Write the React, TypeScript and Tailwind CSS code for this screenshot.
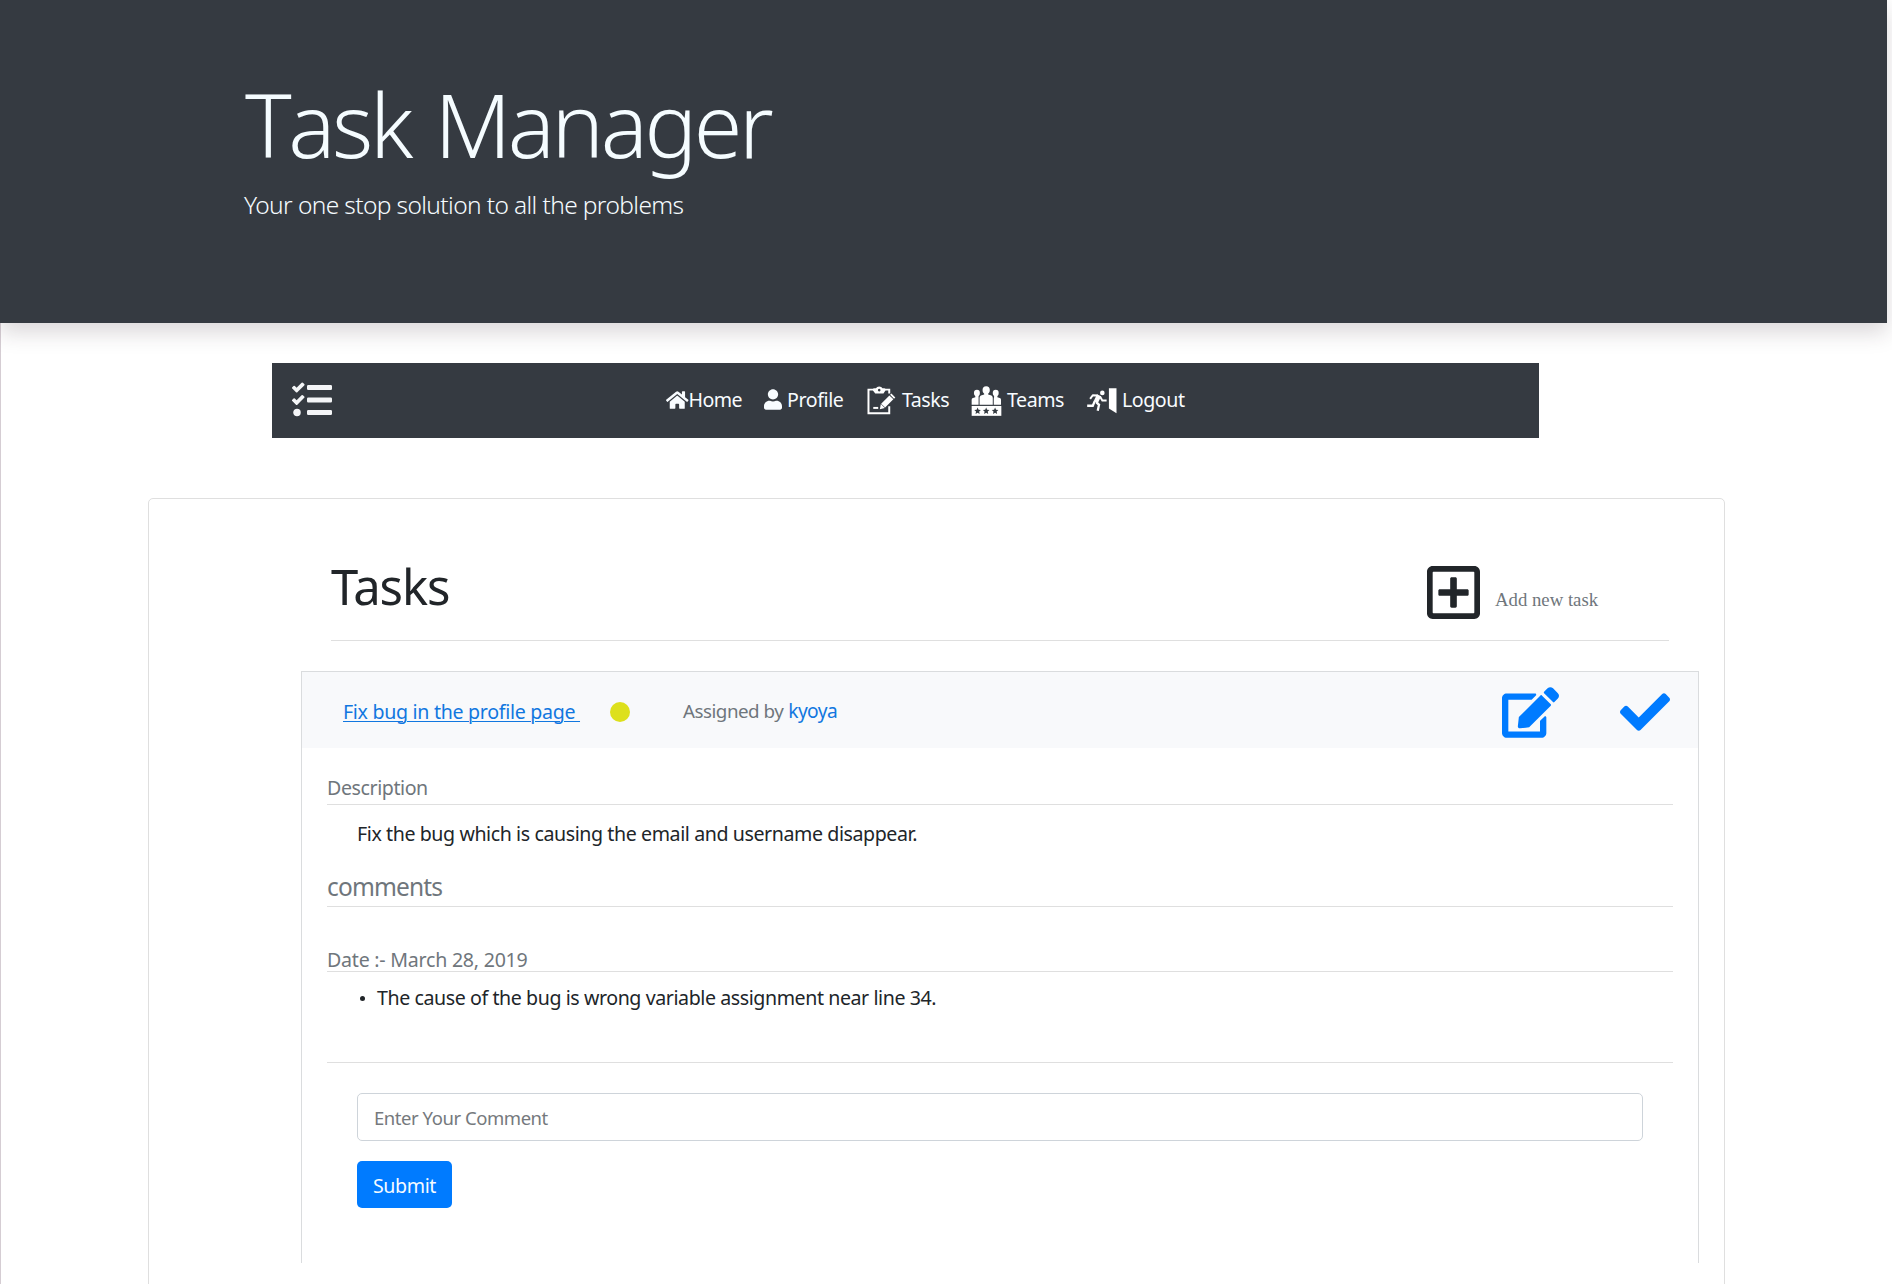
import React from 'react';
import { FaTasks, FaHome, FaUser, FaRegPlusSquare, FaEdit, FaCheck } from 'react-icons/fa';

function ClipboardIcon() {
  return (
    <svg viewBox="650 52 88 90" className="h-[30px] w-[29px]" fill="none" stroke="#fff">
      <path d="M670 62.500H654.500V134.500H717.500V113M704 62.500H717.500V74" strokeWidth="6" />
      <path
        d="M668 61Q668 58 672 58H677Q680 53 687 53T697 58H702Q706 58 706 61V65L700 74H675L668 65ZM687 60A4 4 0 1 0 687.100 60Z"
        fill="#fff"
        fillRule="evenodd"
        stroke="none"
      />
      <path d="M669 118H684" strokeWidth="6" />
      <path d="M689 122L692 106L704 118ZM693 105L718 80L730 92L705 117ZM720 78L724 74L736 86L732 90Z" fill="#fff" stroke="none" />
    </svg>
  );
}

function TeamIcon() {
  return (
    <svg viewBox="214 48 94 96" className="h-[32px] w-[31px]" fill="#fff">
      <ellipse cx="260" cy="63" rx="11" ry="12" />
      <ellipse cx="232" cy="72" rx="9" ry="10" />
      <ellipse cx="289" cy="72" rx="9" ry="10" />
      <path d="M254 70H266V76L276 79Q280 81 280 86V107H240V86Q240 81 244 79L254 76Z" />
      <path d="M227 78H237V85Q237 87 237 90V107H216V92Q216 88 220 87L227 85Z" />
      <path d="M284 78H294V85L301 87Q305 88 305 92V107H283V90Q283 87 284 85Z" />
      <path d="M216 111H306V141H216Z" />
      <g fill="#343a40">
        <path d="M234 116l3 6.500 7 .8-5.200 4.800 1.400 7-6.200-3.500-6.200 3.500 1.400-7-5.200-4.800 7-.8z" />
        <path d="M260 116l3 6.500 7 .8-5.200 4.800 1.400 7-6.200-3.500-6.200 3.500 1.400-7-5.200-4.800 7-.8z" />
        <path d="M287 116l3 6.500 7 .8-5.200 4.800 1.400 7-6.200-3.500-6.200 3.500 1.400-7-5.200-4.800 7-.8z" />
      </g>
    </svg>
  );
}

function ExitIcon() {
  return (
    <svg viewBox="558 54 96 82" className="h-[27px] w-[32px]" fill="none" stroke="#fff">
      <circle cx="607" cy="72" r="7" fill="#fff" stroke="none" />
      <path d="M570 90L578 79L593 80" strokeWidth="6" strokeLinejoin="round" />
      <path d="M597 79L587 100" strokeWidth="14" />
      <path d="M600 83L607 95H620" strokeWidth="6" />
      <path d="M584 97L578 111H561" strokeWidth="7" />
      <path d="M588 100L597 108L593 126" strokeWidth="7" />
      <path d="M627 58H650V134L627 119Z" fill="#fff" stroke="none" />
    </svg>
  );
}

function Rule({ className }: { className: string }) {
  return <hr className={`h-px border-0 bg-[#dfdfdf] ${className}`} />;
}

function NavBar() {
  return (
    <nav className="mt-10 ml-[271px] flex h-[75px] w-[1267px] items-center bg-[#353a41] text-[19.6px] leading-7 text-[#f8fcff]">
      <FaTasks className="-mt-px ml-5 size-10 text-[#f4f5f7]" />
      <a className="ml-[334px] flex w-[98px] items-center">
        <FaHome className="-mt-0.5 h-5 w-[22.5px]" />
        <span className="-mt-px tracking-[-0.6px]">Home</span>
      </a>
      <a className="flex w-[103px] items-center">
        <FaUser className="-mt-0.5 h-[21px] w-[18px]" />
        <span className="-mt-px ml-[5px] tracking-[-0.4px]">Profile</span>
      </a>
      <a className="flex w-[104px] items-center">
        <ClipboardIcon />
        <span className="-mt-px ml-1.5 tracking-[-0.5px]">Tasks</span>
      </a>
      <a className="flex w-[115px] items-center">
        <TeamIcon />
        <span className="-mt-px ml-[5px] tracking-[-0.45px]">Teams</span>
      </a>
      <a className="flex items-center">
        <ExitIcon />
        <span className="-mt-px ml-1 tracking-[-0.45px]">Logout</span>
      </a>
    </nav>
  );
}

function TaskPanel() {
  return (
    <article className="mt-[30px] ml-[152px] h-[592px] w-[1398px] border border-b-0 border-[#dadcde] text-[19.6px] leading-7 text-[#212529]">
      <header className="flex h-[76px] items-center bg-[#f8f9fb] pl-[41px]">
        <a className="mt-[3px] w-[237px] whitespace-pre tracking-[-0.3px] text-[#1177e0] underline decoration-1 underline-offset-2">
          {'Fix bug in the profile page '}
        </a>
        <span className="mt-[3px] ml-[30px] size-5 rounded-full bg-[#dde01c]" />
        <span className="mt-px ml-[53px] flex w-[819px] gap-[5px] text-[18.8px] text-[#6f767c]">
          <span className="tracking-[-0.5px]">Assigned by</span>
          <a className="text-[19.2px] tracking-[-0.6px] text-[#1177e0]">kyoya</a>
        </span>
        <FaEdit className="mt-[5px] h-[51px] w-[57px] text-[#007bff]" />
        <FaCheck className="mt-1 ml-[61px] size-[50px] text-[#007bff]" />
      </header>
      <div className="ml-[25px] w-[1346px]">
        <h5 className="pt-[26px] tracking-[-0.42px] text-[#6f767c]">Description</h5>
        <Rule className="mt-0.5" />
        <p className="mt-[15px] ml-[30px] tracking-[-0.41px]">Fix the bug which is causing the email and username disappear.</p>
        <h4 className="mt-[21px] text-[24.5px] leading-9 tracking-[-0.85px] text-[#6f767c]">comments</h4>
        <Rule className="mt-px" />
        <h6 className="mt-[41px] h-[23px] leading-6 tracking-[-0.24px] text-[#6f767c]">Date :- March 28, 2019</h6>
        <Rule className="mt-0" />
        <p className="mt-3 ml-[33px] flex items-center tracking-[-0.42px]">
          <span className="mt-px mr-3 size-[5px] rounded-full bg-[#212529]" />
          The cause of the bug is wrong variable assignment near line 34.
        </p>
        <Rule className="mt-[50px]" />
        <form className="mt-[30px] ml-[30px]" onSubmit={(e) => e.preventDefault()}>
          <input
            placeholder="Enter Your Comment"
            className="block h-12 w-[1286px] rounded-[5px] border border-[#ced4da] bg-white px-4 text-[18.5px] tracking-[-0.45px] outline-none placeholder:text-[#75797d]"
          />
          <button className="mt-5 h-[47px] w-[95px] rounded-[5px] bg-[#007bff] pt-0.5 tracking-[-0.4px] text-[#f4faff]">Submit</button>
        </form>
      </div>
    </article>
  );
}

export default function App() {
  return (
    <div className="flex h-[1284px] flex-col overflow-hidden bg-white font-['Noto_Sans',sans-serif]">
      <header className="z-10 h-[323px] w-[1887px] shrink-0 bg-[#353a41] pt-[71px] pl-[245px] text-[#f5fcff] shadow-[0_10px_20px_rgba(50,30,40,0.17)]">
        <h1 className="text-[88px] leading-[106px] font-light tracking-[-3.4px] [font-kerning:none] [word-spacing:5px]">Task Manager</h1>
        <p className="mt-[10px] -ml-px text-[24.5px] leading-9 font-light tracking-[-0.62px]">Your one stop solution to all the problems</p>
      </header>
      <main className="grow border-l border-[#d5cdd3]">
        <NavBar />
        <section className="mt-[60px] ml-[147px] h-[800px] w-[1577px] rounded-[5px] border border-[#dfdfdf]">
          <div className="ml-[182px] flex h-[142px] w-[1338px] border-b border-[#dfdfdf] pt-[57px] text-[#212529]">
            <h2 className="w-[1096px] text-[49px] leading-[60px] tracking-[-1.1px]">Tasks</h2>
            <FaRegPlusSquare className="mt-1.5 h-[61px] w-[53px]" />
            <span className="mt-8 ml-[15px] font-['Liberation_Serif',serif] text-[18.75px] leading-6 text-[#6f767c]">Add new task</span>
          </div>
          <TaskPanel />
        </section>
      </main>
    </div>
  );
}
